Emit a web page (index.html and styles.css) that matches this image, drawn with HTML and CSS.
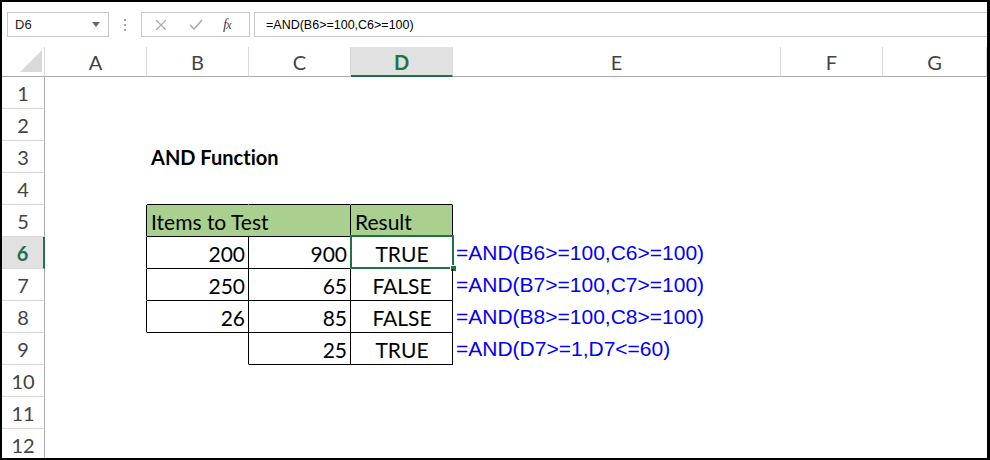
FILE: index.html
```html
<!DOCTYPE html>
<html>
<head>
<meta charset="utf-8">
<link rel="stylesheet" href="styles.css">
</head>
<body>
<div class="frame">
  <div class="fbar">
    <div class="namebox"><span class="nb-text">D6</span><svg class="nb-arrow" width="8" height="5" viewBox="0 0 8 5"><polygon points="0,0 8,0 4,5" fill="#6b6b6b"/></svg></div>
    <div class="dots"><span></span><span></span><span></span></div>
    <div class="fxbox">
      <svg class="ic-x" width="12" height="12" viewBox="0 0 12 12"><path d="M1 1 L11 11 M11 1 L1 11" stroke="#ababab" stroke-width="1.2" fill="none"/></svg>
      <svg class="ic-check" width="14" height="11" viewBox="0 0 14 11"><path d="M1 6 L5 10 L13 1" stroke="#ababab" stroke-width="1.6" fill="none"/></svg>
      <span class="ic-fx">f<span class="fx-x">x</span></span>
    </div>
    <div class="formula">=AND(B6&gt;=100,C6&gt;=100)</div>
  </div>

  <div class="row head">
    <div class="h corner"><svg width="24" height="24" viewBox="0 0 24 24"><polygon points="23,1 23,23 1,23" fill="#dadada"/></svg></div>
    <div class="h">A</div><div class="h">B</div><div class="h">C</div><div class="h sel">D</div><div class="h">E</div><div class="h">F</div><div class="h">G</div>
  </div>

  <div class="row"><div class="rh">1</div><div class="c"></div><div class="c"></div><div class="c"></div><div class="c"></div><div class="c"></div><div class="c"></div><div class="c"></div></div>
  <div class="row"><div class="rh">2</div><div class="c"></div><div class="c"></div><div class="c"></div><div class="c"></div><div class="c"></div><div class="c"></div><div class="c"></div></div>
  <div class="row"><div class="rh">3</div><div class="c"></div><div class="c title">AND Function</div><div class="c"></div><div class="c"></div><div class="c"></div><div class="c"></div><div class="c"></div></div>
  <div class="row"><div class="rh">4</div><div class="c"></div><div class="c bb"></div><div class="c bb"></div><div class="c bb"></div><div class="c"></div><div class="c"></div><div class="c"></div></div>
  <div class="row"><div class="rh">5</div><div class="c br"></div><div class="c span2 green br bb">Items to Test</div><div class="c green br bb">Result</div><div class="c"></div><div class="c"></div><div class="c"></div></div>
  <div class="row"><div class="rh rsel">6</div><div class="c br"></div><div class="c num br bb">200</div><div class="c num br bb">900</div><div class="c mid br bb active">TRUE<span class="selbox"></span><span class="handle"></span></div><div class="c fml">=AND(B6&gt;=100,C6&gt;=100)</div><div class="c"></div><div class="c"></div></div>
  <div class="row"><div class="rh">7</div><div class="c br"></div><div class="c num br bb">250</div><div class="c num br bb">65</div><div class="c mid br bb">FALSE</div><div class="c fml">=AND(B7&gt;=100,C7&gt;=100)</div><div class="c"></div><div class="c"></div></div>
  <div class="row"><div class="rh">8</div><div class="c br"></div><div class="c num br bb">26</div><div class="c num br bb">85</div><div class="c mid br bb">FALSE</div><div class="c fml">=AND(B8&gt;=100,C8&gt;=100)</div><div class="c"></div><div class="c"></div></div>
  <div class="row"><div class="rh">9</div><div class="c"></div><div class="c br"></div><div class="c num br bb">25</div><div class="c mid br bb">TRUE</div><div class="c fml">=AND(D7&gt;=1,D7&lt;=60)</div><div class="c"></div><div class="c"></div></div>
  <div class="row"><div class="rh">10</div><div class="c"></div><div class="c"></div><div class="c"></div><div class="c"></div><div class="c"></div><div class="c"></div><div class="c"></div></div>
  <div class="row"><div class="rh">11</div><div class="c"></div><div class="c"></div><div class="c"></div><div class="c"></div><div class="c"></div><div class="c"></div><div class="c"></div></div>
  <div class="row"><div class="rh">12</div><div class="c"></div><div class="c"></div><div class="c"></div><div class="c"></div><div class="c"></div><div class="c"></div><div class="c"></div></div>
</div>
</body>
</html>
```

FILE: styles.css
```css
html, body {
  margin: 0;
  padding: 0;
  background: #ffffff;
}

.frame {
  width: 990px;
  height: 460px;
  box-sizing: border-box;
  border-style: solid;
  border-color: #000000;
  border-width: 2px 3px 2px 2px;
  overflow: hidden;
  background: #ffffff;
  font-family: "Lato", "Noto Sans", sans-serif;
  font-variant-ligatures: none;
}

/* formula bar */
.fbar {
  height: 45px;
  box-sizing: border-box;
  padding-top: 10px;
  display: flex;
  align-items: flex-start;
}

.namebox {
  margin-left: 5px;
  width: 102px;
  height: 25px;
  box-sizing: border-box;
  border: 1px solid #c6c6c6;
  display: flex;
  align-items: center;
  justify-content: space-between;
  padding: 0 8px 0 7px;
  font-family: "Liberation Sans", Arial, sans-serif;
  font-size: 13px;
  color: #222222;
}

.dots {
  width: 32px;
  height: 25px;
  display: flex;
  flex-direction: column;
  align-items: center;
  justify-content: center;
  gap: 3px;
}

.dots span {
  width: 2px;
  height: 2px;
  background: #a0a0a0;
}

.fxbox {
  width: 109px;
  height: 25px;
  box-sizing: border-box;
  border: 1px solid #c6c6c6;
  display: flex;
  align-items: center;
  padding-left: 13px;
}

.ic-check {
  margin-left: 22px;
}

.ic-fx {
  margin-left: 20px;
  font-family: "Liberation Serif", "Times New Roman", serif;
  font-style: italic;
  font-size: 15px;
  color: #444444;
  letter-spacing: -1px;
}

.fx-x {
  font-size: 12px;
}

.formula {
  margin-left: 4px;
  flex: 1;
  height: 25px;
  box-sizing: border-box;
  border: 1px solid #c6c6c6;
  border-right: none;
  display: flex;
  align-items: center;
  padding-left: 11px;
  font-family: "Liberation Sans", Arial, sans-serif;
  font-size: 12.5px;
  color: #000000;
}

/* grid */
.row {
  display: grid;
  grid-template-columns: 43px 102px 102px 102px 102px 328px 102px 104px;
  height: 32px;
}

.row.head {
  height: 30px;
}

.h {
  box-sizing: border-box;
  border-right: 1px solid #d9d9d9;
  border-bottom: 1px solid #ababab;
  display: flex;
  align-items: center;
  justify-content: center;
  font-size: 20px;
  color: #444444;
  padding-top: 1px;
}

.h.corner {
  border-right-color: #d9d9d9;
  align-items: flex-end;
  justify-content: flex-end;
  padding: 0 1px 3px 0;
}

.h.sel {
  background: #e1e1e1;
  border-bottom: 2px solid #217346;
  color: #217346;
  font-weight: bold;
}

.rh {
  box-sizing: border-box;
  border-right: 1px solid #ababab;
  border-bottom: 1px solid #d9d9d9;
  display: flex;
  align-items: center;
  justify-content: center;
  font-size: 20px;
  color: #444444;
  padding-top: 1px;
}

.rh.rsel {
  background: #e1e1e1;
  border-right: 2px solid #217346;
  color: #217346;
  font-weight: bold;
}

.c {
  position: relative;
  box-sizing: border-box;
  border-right: 1px solid transparent;
  border-bottom: 1px solid transparent;
  display: flex;
  align-items: center;
  padding: 1px 3px 0 4px;
  white-space: nowrap;
  font-size: 21px;
  color: #000000;
  overflow: visible;
}

.c.br { border-right-color: #000000; }
.c.bb { border-bottom-color: #000000; }

.span2 { grid-column: span 2; }

.green { background: #a9d08e; }

.num { justify-content: flex-end; }

.mid { justify-content: center; }

.title {
  font-weight: bold;
  font-size: 20px;
}

.fml {
  font-family: "Liberation Sans", Arial, sans-serif;
  font-size: 21px;
  color: #0000ff;
  padding-left: 3px;
  padding-top: 0;
}

.selbox {
  position: absolute;
  top: -2px;
  left: -1px;
  right: -2px;
  bottom: -1px;
  border: 2px solid #217346;
  pointer-events: none;
}

.handle {
  position: absolute;
  right: -5px;
  bottom: -4px;
  width: 5px;
  height: 5px;
  background: #217346;
  border: 1px solid #ffffff;
}
```
